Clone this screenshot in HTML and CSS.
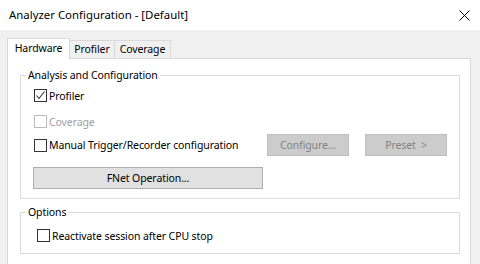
FILE: index.html
```html
<!DOCTYPE html>
<html>
<head>
<meta charset="utf-8">
<link rel="stylesheet" href="styles.css">
</head>
<body>
<div class="window">
  <div class="titlebar">
    <span class="title">Analyzer Configuration - [Default]</span>
    <svg class="close" width="11" height="11" viewBox="0 0 11 11"><path d="M0.5 0.5 L10.5 10.5 M10.5 0.5 L0.5 10.5" stroke="#000" stroke-width="1" fill="none"/></svg>
  </div>
  <div class="body">
    <div class="tabs">
      <div class="tab active">Hardware</div>
      <div class="tab t-profiler">Profiler</div>
      <div class="tab t-coverage">Coverage</div>
    </div>
    <div class="panel">
      <fieldset class="group g1">
        <legend>Analysis and Configuration</legend>
        <div class="row r1">
          <span class="cb checked"><svg width="11" height="11" viewBox="0 0 11 11"><path d="M1.5 5.5 L4 8.5 L9.5 1.5" stroke="#333" stroke-width="1.1" fill="none"/></svg></span>
          <span class="lbl">Profiler</span>
        </div>
        <div class="row r2">
          <span class="cb disabled"></span>
          <span class="lbl dis">Coverage</span>
        </div>
        <div class="row r3">
          <span class="cb"></span>
          <span class="lbl grow">Manual Trigger/Recorder configuration</span>
          <span class="btn dbtn">Configure...</span>
          <span class="btn dbtn preset">Preset &nbsp;&gt;</span>
        </div>
        <div class="btn fnet">FNet Operation...</div>
      </fieldset>
      <fieldset class="group g2">
        <legend>Options</legend>
        <div class="row r4">
          <span class="cb"></span>
          <span class="lbl">Reactivate session after CPU stop</span>
        </div>
      </fieldset>
    </div>
  </div>
</div>
</body>
</html>
```
FILE: styles.css
```css
html, body {
  margin: 0;
  padding: 0;
}
body {
  font-family: "Noto Sans", "Open Sans", sans-serif;
  font-size: 10.5px;
  letter-spacing: -0.1px;
  color: #000;
  background: #f0f0f0;
}
.window {
  width: 480px;
  height: 264px;
  overflow: hidden;
  background: #f0f0f0;
  display: flex;
  flex-direction: column;
}
.titlebar {
  height: 30px;
  flex: none;
  background: #fff;
  display: flex;
  align-items: center;
  padding-left: 9px;
  padding-right: 10px;
  box-sizing: border-box;
}
.title {
  flex: 1;
  font-size: 11.4px;
  letter-spacing: 0;
  line-height: 16px;
  padding-bottom: 1px;
}
.close {
  display: block;
}
.body {
  padding-top: 8px;
  flex: 1;
  display: flex;
  flex-direction: column;
}
.tabs {
  display: flex;
  align-items: flex-end;
  height: 20px;
  padding-left: 7px;
  position: relative;
  z-index: 1;
}
.tab {
  box-sizing: border-box;
  border: 1px solid #d9d9d9;
  border-bottom: none;
  height: 18px;
  line-height: 16px;
  text-align: center;
  background: #f0f0f0;
}
.tab.active {
  width: 63px;
  height: 21px;
  margin-bottom: -1px;
  background: #fff;
  line-height: 18px;
}
.t-profiler {
  width: 46px;
  margin-left: -1px;
}
.t-coverage {
  width: 57px;
  margin-left: -1px;
}
.panel {
  margin-left: 7px;
  width: 464px;
  height: 240px;
  box-sizing: border-box;
  background: #fff;
  border: 1px solid #d9d9d9;
  padding: 9px 10px 0 12px;
  flex: none;
}
.group {
  margin: 0;
  border: 1px solid #dcdcdc;
  padding: 0 12px 9px 13px;
  min-width: 0;
}
.group legend {
  padding: 0 2px;
  margin-left: -8px;
  line-height: 15px;
  height: 15px;
}
.row {
  display: flex;
  align-items: center;
  height: 21px;
}
.r1 { margin-top: 2px; }
.r2 { margin-top: 5px; }
.r3 { margin-top: 2px; height: 22px; }
.r4 { margin-top: 5px; margin-left: 3px; }
.cb {
  width: 13px;
  height: 13px;
  box-sizing: border-box;
  border: 1px solid #333;
  background: #fff;
  flex: none;
  display: flex;
  align-items: center;
  justify-content: center;
}
.cb svg { display: block; }
.cb.disabled {
  border-color: #bcbcbc;
}
.lbl {
  margin-left: 2px;
  white-space: nowrap;
}
.lbl.dis { color: #a0a0a0; }
.grow { flex: 1; }
.btn {
  box-sizing: border-box;
  height: 22px;
  display: flex;
  align-items: center;
  justify-content: center;
  white-space: nowrap;
}
.dbtn {
  width: 82px;
  background: #cccccc;
  border: 1px solid #bfbfbf;
  color: #838383;
}
.preset { margin-left: 16px; }
.fnet {
  margin-top: 11px;
  margin-left: -1px;
  width: 230px;
  background: #e1e1e1;
  border: 1px solid #adadad;
}
.g2 {
  margin-top: 6px;
  padding-bottom: 7px;
}
```
